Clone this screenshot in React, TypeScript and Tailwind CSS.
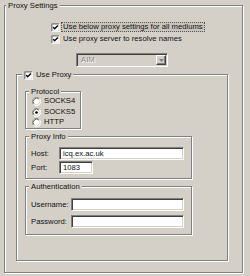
import React from 'react';

// Classic Windows look: etched group boxes, sunken edits, 3D checkboxes
const face = 'bg-[#d4d0c8]';

function Group({
  label,
  className,
  labelClass,
  children,
}: {
  label: React.ReactNode;
  className: string;
  labelClass: string;
  children?: React.ReactNode;
}) {
  return (
    <div
      className={`relative border border-[#808080] shadow-[1px_1px_0_#fff,inset_1px_1px_0_#fff] ${className}`}
    >
      <div className={`absolute top-[-5px] h-[10px] leading-[10px] px-[2px] flex items-center ${face} ${labelClass}`}>
        {label}
      </div>
      {children}
    </div>
  );
}

function CheckBox({ checked }: { checked: boolean }) {
  return (
    <svg width="9" height="9" viewBox="0 0 13 13" className="shrink-0">
      <rect x="0" y="0" width="13" height="13" fill="#fff" />
      <path d="M0.5 12.5 V0.5 H12.5" stroke="#808080" fill="none" />
      <path d="M1.5 11.5 V1.5 H11.5" stroke="#404040" fill="none" />
      <path d="M1.5 11.5 H11.5 V1.5" stroke="#d4d0c8" fill="none" />
      {checked && <path d="M3 6 L5.2 8.4 L10 3.6" stroke="#000" strokeWidth="2" fill="none" />}
    </svg>
  );
}

function Radio({ checked }: { checked: boolean }) {
  return (
    <svg width="9" height="9" viewBox="0 0 12 12" className="shrink-0">
      <circle cx="6" cy="6" r="5.5" fill="#fff" />
      <path d="M9.89 2.11 A5.5 5.5 0 0 0 2.11 9.89" stroke="#808080" fill="none" />
      <path d="M2.11 9.89 A5.5 5.5 0 0 0 9.89 2.11" stroke="#fff" fill="none" />
      <path d="M9.18 2.82 A4.5 4.5 0 0 0 2.82 9.18" stroke="#404040" fill="none" />
      <path d="M2.82 9.18 A4.5 4.5 0 0 0 9.18 2.82" stroke="#d4d0c8" fill="none" />
      {checked && <circle cx="6" cy="6" r="1.8" fill="#000" />}
    </svg>
  );
}

function Edit({ value, className }: { value?: string; className: string }) {
  return (
    <div
      className={`h-[13px] bg-white border border-t-[#808080] border-l-[#808080] border-b-white border-r-white shadow-[inset_1px_1px_0_#404040,inset_-1px_-1px_0_#d4d0c8] pl-[3px] leading-[11px] ${className}`}
    >
      {value}
    </div>
  );
}

const radios = [
  { label: 'SOCKS4', checked: false, mt: 'mt-[4px]' },
  { label: 'SOCKS5', checked: true, mt: 'mt-[1px]' },
  { label: 'HTTP', checked: false, mt: 'mt-0' },
];

export default function App() {
  return (
    <div
      className={`w-[250px] h-[276px] overflow-hidden pt-[5px] pl-[4px] ${face} text-[7.7px] text-[#111] font-['Liberation_Sans',Arial,sans-serif]`}
    >
      <Group label="Proxy Settings" className="w-[239px] h-[268px]" labelClass="left-[1px]">
        {/* top options */}
        <div className="ml-[46px] mt-[16px] h-[10px] flex items-center">
          <CheckBox checked />
          <span className="ml-[1px] h-[10px] leading-[8px] px-[1px] border border-dotted border-[#555] bg-[#c8c4bc]">
            Use below proxy settings for all mediums
          </span>
        </div>
        <div className="ml-[46px] mt-[2px] h-[10px] flex items-center">
          <CheckBox checked />
          <span className="ml-[3px]">Use proxy server to resolve names</span>
        </div>

        {/* disabled combo */}
        <div className="ml-[71px] mt-[9px] w-[92px] h-[14px] flex border border-t-[#808080] border-l-[#808080] border-b-white border-r-white shadow-[inset_1px_1px_0_#404040,inset_-1px_-1px_0_#d4d0c8] p-[1px]">
          <div className="flex-1 pl-[3px] leading-[10px] text-[#8c8c8c] [text-shadow:1px_1px_0_#fff]">AIM</div>
          <div className="w-[10px] h-[10px] flex items-center justify-center border border-t-white border-l-white border-b-[#404040] border-r-[#404040] shadow-[inset_-1px_-1px_0_#808080]">
            <svg width="5" height="3" viewBox="0 0 5 3">
              <path d="M0 0 H5 L2.5 3 Z" fill="#808080" />
            </svg>
          </div>
        </div>

        <Group
          className="ml-[11px] mt-[7px] w-[212px] h-[187px]"
          labelClass="left-[5px]"
          label={
            <>
              <CheckBox checked />
              <span className="ml-[3px]">Use Proxy</span>
            </>
          }
        >
          <Group label="Protocol" className="ml-[8px] mt-[16px] w-[56px] h-[38px]" labelClass="left-[3px]">
            <div className="flex flex-col">
              {radios.map((r) => (
                <div key={r.label} className={`flex items-center h-[10px] ml-[6px] ${r.mt}`}>
                  <Radio checked={r.checked} />
                  <span className="ml-[3px]">{r.label}</span>
                </div>
              ))}
            </div>
          </Group>

          <Group label="Proxy Info" className="ml-[8px] mt-[7px] w-[167px] h-[43px]" labelClass="left-[3px]">
            <div className="flex items-center mt-[10px] ml-[5px]">
              <span className="w-[28px]">Host:</span>
              <Edit value="icq.ex.ac.uk" className="w-[125px]" />
            </div>
            <div className="flex items-center mt-[1px] ml-[5px]">
              <span className="w-[28px]">Port:</span>
              <Edit value="1083" className="w-[34px]" />
            </div>
          </Group>

          <Group label="Authentication" className="ml-[8px] mt-[7px] w-[167px] h-[49px]" labelClass="left-[3px]">
            <div className="flex items-center mt-[11px] ml-[5px]">
              <span className="w-[40px]">Username:</span>
              <Edit className="w-[113px]" />
            </div>
            <div className="flex items-center mt-[4px] ml-[5px]">
              <span className="w-[40px]">Password:</span>
              <Edit className="w-[113px]" />
            </div>
          </Group>
        </Group>
      </Group>
    </div>
  );
}
